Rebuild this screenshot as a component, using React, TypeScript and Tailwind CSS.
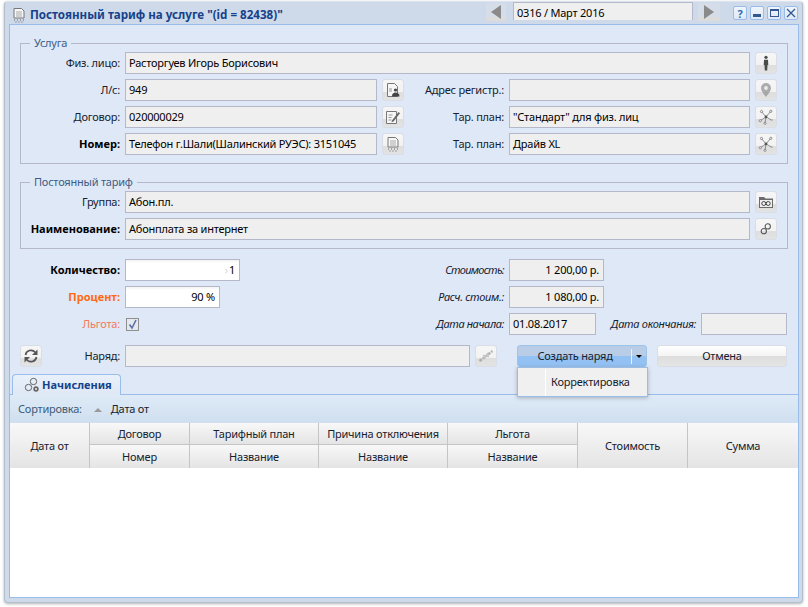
import type { ReactNode } from "react"

/* --- Icons --- */

function Svg({ children, size = 16, className = "" }: { children: ReactNode; size?: number; className?: string }) {
  return (
    <svg width={size} height={size} viewBox="0 0 16 16" fill="none" className={className}>
      {children}
    </svg>
  )
}

function PersonIcon() {
  return (
    <Svg>
      <circle cx="8" cy="2.300" r="1.600" fill="#4a4a4a" />
      <path d="M6 4.800h4l.3 5.200H9.500L9.200 15.500H6.800L6.500 10H5.700z" fill="#4a4a4a" />
    </Svg>
  )
}

function PinIcon() {
  return (
    <Svg>
      <path d="M8 1a5 5 0 0 0-5 5c0 3.400 3.400 6.400 5 9 1.600-2.600 5-5.600 5-9a5 5 0 0 0-5-5z" fill="#8f8f8f" />
      <circle cx="8" cy="6" r="1.900" fill="#e8e8e8" />
    </Svg>
  )
}

function PlanIcon() {
  return (
    <Svg>
      <path d="M8 8 3.500 2.500M8 8l4.500-5.500M8 8l-5.500 3.500M8 8l-1 6M8 8l5.500 3" stroke="#777" strokeWidth="0.800" />
      <circle cx="8" cy="8" r="1.400" fill="#555" />
      <circle cx="3.500" cy="2.500" r="1.100" fill="#f4f4f4" stroke="#777" strokeWidth="0.800" />
      <circle cx="12.800" cy="2.300" r="1.100" fill="#f4f4f4" stroke="#777" strokeWidth="0.800" />
      <circle cx="2.300" cy="11.700" r="1.100" fill="#f4f4f4" stroke="#777" strokeWidth="0.800" />
      <circle cx="7" cy="14.300" r="1.100" fill="#f4f4f4" stroke="#777" strokeWidth="0.800" />
      <circle cx="13.700" cy="11" r="1" fill="#aaa" />
    </Svg>
  )
}

function AccountIcon() {
  return (
    <Svg>
      <path d="M2.500 1.500h7l3 3v10h-10z" fill="#f6f6f6" stroke="#777" />
      <path d="M4 7h3M4 9h3" stroke="#999" />
      <circle cx="10.500" cy="8" r="1.600" fill="#444" />
      <path d="M7 14.500c0-3 1.500-4 3.500-4s4 1 4 4z" fill="#444" />
    </Svg>
  )
}

function EditIcon() {
  return (
    <Svg>
      <path d="M1.500 2.500h10v12h-10z" fill="#f6f6f6" stroke="#777" />
      <path d="M3.500 6h4M3.500 8.500h3M3.500 11h3" stroke="#999" />
      <path d="M7 11.500 13.500 3l1.500 1.200L8.500 12.500l-2 .8z" fill="#666" />
    </Svg>
  )
}

function StampIcon() {
  return (
    <Svg>
      <path d="M3 1.500h7.500l2.500 2.500v7H3z" fill="#f6f6f6" stroke="#777" />
      <path d="M5 5h6M5 7h6M5 9h6" stroke="#aaa" />
      <path d="M3 13h1M6 13h1M9 13h1M12 13h1M4.500 15h1M7.500 15h1M10.500 15h1" stroke="#666" strokeWidth="1.200" />
    </Svg>
  )
}

function GroupIcon() {
  return (
    <Svg>
      <path d="M1 3h5l1.500 1.500H15v9.500H1z" fill="#6b6b6b" />
      <rect x="2" y="6" width="12" height="7" fill="#efefef" />
      <circle cx="5.800" cy="9.500" r="2" stroke="#444" />
      <circle cx="10.200" cy="9.500" r="2" stroke="#444" />
    </Svg>
  )
}

function LinkIcon() {
  return (
    <Svg size={14}>
      <circle cx="10" cy="5" r="3" stroke="#555" strokeWidth="1.200" />
      <circle cx="5.500" cy="10.500" r="3" stroke="#555" strokeWidth="1.200" />
    </Svg>
  )
}

function ChargeIcon() {
  return (
    <Svg>
      <circle cx="9.500" cy="4.500" r="3.200" stroke="#666" />
      <circle cx="4.500" cy="10.500" r="3.200" stroke="#666" />
      <circle cx="12" cy="12" r="2.700" fill="#666" />
      <circle cx="12" cy="12" r="1" fill="#eee" />
    </Svg>
  )
}

function RefreshIcon() {
  return (
    <Svg>
      <path d="M2.500 7A5.600 5.600 0 0 1 12.200 4.200" stroke="#555" strokeWidth="1.700" />
      <path d="M13.500 9a5.600 5.600 0 0 1-9.700 2.800" stroke="#555" strokeWidth="1.700" />
      <path d="M14.500 1.500V7H9z" fill="#555" />
      <path d="M1.500 14.500V9H7z" fill="#555" />
    </Svg>
  )
}

function ChainIcon() {
  return (
    <Svg>
      <path d="M1.500 13 6 9.500M10 6.500 14.500 3" stroke="#999" strokeWidth="2.500" strokeDasharray="3 1" />
      <path d="M5 7.500 11 8.500M6 11l4-6" stroke="#aaa" strokeWidth="1.500" />
    </Svg>
  )
}

/* --- Form parts --- */

function IconButton({ children, faded }: { children: ReactNode; faded?: boolean }) {
  return (
    <button className="w-[22px] h-[22px] shrink-0 flex items-center justify-center rounded-[3px] border border-[#d8dde6] bg-[linear-gradient(#f6f6f6_0%,#f2f2f2_62%,#dedede_62%,#e3e3e3_100%)]">
      <span className={faded ? "opacity-70 flex" : "flex"}>{children}</span>
    </button>
  )
}

function Label({ children, width = "w-[95px]", className = "text-[#16212e]" }: { children: ReactNode; width?: string; className?: string }) {
  return <div className={`${width} shrink-0 text-right mr-[5px] ${className}`}>{children}</div>
}

function Box({ children, className = "", white }: { children?: ReactNode; className?: string; white?: boolean }) {
  return (
    <div
      className={`h-[22px] border border-[#b5b8c8] pl-[3px] pr-[4px] leading-[20px] whitespace-nowrap overflow-hidden text-black ${white ? "bg-[linear-gradient(#f2f2f2_0%,#ffffff_15%)]" : "bg-[#efefef]"} ${className}`}
    >
      {children}
    </div>
  )
}

function Legend({ children }: { children: ReactNode }) {
  return <legend className="ml-[5px] px-[4px] h-[14px] leading-[14px] text-[#3e5c86]">{children}</legend>
}

function HeadCell({ children, className = "" }: { children: ReactNode; className?: string }) {
  return (
    <div className={`flex items-center justify-center pt-[1px] text-[#16212e] bg-[linear-gradient(#f8f8f8,#e4e4e5)] ${className}`}>
      {children}
    </div>
  )
}

function HeadPair({ top, bottom, width }: { top: string; bottom: string; width: string }) {
  return (
    <div className={`${width} flex flex-col border-r border-[#c5c5c5]`}>
      <HeadCell className="h-[22px] border-b border-[#c5c5c5]">{top}</HeadCell>
      <HeadCell className="flex-1">{bottom}</HeadCell>
    </div>
  )
}

function WinButton({ children }: { children: ReactNode }) {
  return (
    <button className="w-[14px] h-[14px] flex items-center justify-center rounded-[2px] border border-[#99bce8] bg-[linear-gradient(#f0f5fb,#dfe8f6)]">
      {children}
    </button>
  )
}

function NavArrow({ dir, width }: { dir: "left" | "right"; width: string }) {
  return (
    <div className={`${width} h-[18px] mt-[1px] flex items-center justify-center bg-[linear-gradient(#d5dde8_0%,#d5dde8_78%,#dcdcdc_78%)]`}>
      <svg width="12" height="14" viewBox="0 0 12 14">
        <path d={dir === "left" ? "M11 0v14L1 7z" : "M1 0v14l10-7z"} fill="#8a8a8a" />
      </svg>
    </div>
  )
}

export default function App() {
  return (
    <div
      className="w-[808px] h-[607px] bg-white pt-[1px] pl-[4px] text-[11px] tracking-[-0.22px] text-black overflow-hidden"
      style={{ fontFamily: '"Noto Sans", "DejaVu Sans", sans-serif' }}
    >
      <div className="relative w-[799px] h-[602px] rounded-[4px] bg-[#cedaea] border border-[#b4bfce] border-t-[#dbe4ef] shadow-[0_1px_3px_rgba(0,0,0,0.3)] pl-[4px] pr-[3px] pb-[4px] flex flex-col">
        {/* title bar */}
        <div className="h-[22px] flex items-start shrink-0">
          <div className="flex items-center h-[19px] mt-[3px] ml-[2px]">
            <StampIcon />
            <span className="ml-[3px] font-bold text-[#15428b] text-[11.6px] tracking-normal whitespace-nowrap">Постоянный тариф на услуге "(id = 82438)"</span>
          </div>
          <div className="ml-auto flex items-start mr-[1px]">
            <NavArrow dir="left" width="w-[20px]" />
            <div className="ml-[7px] w-[180px] h-[18px] border border-[#b5b8c8] border-b-0 bg-[#efefef] px-[3px] leading-[20px]">0316 / Март 2016</div>
            <div className="ml-[5px]"><NavArrow dir="right" width="w-[22px]" /></div>
            <div className="ml-[13px] mt-[4px] flex gap-[3px]">
              <WinButton><span className="font-bold text-[#2f6db5] leading-none">?</span></WinButton>
              <WinButton><span className="w-[8px] h-[3px] bg-[#31598f] mt-[5px]" /></WinButton>
              <WinButton><span className="w-[9px] h-[8px] border border-t-2 border-[#31598f]" /></WinButton>
              <WinButton>
                <svg width="10" height="10" viewBox="0 0 10 10"><path d="M1 1l8 8M9 1 1 9" stroke="#31598f" strokeWidth="1.300" /></svg>
              </WinButton>
            </div>
          </div>
        </div>

        {/* window body */}
        <div className="relative flex-1 flex flex-col border border-[#99bce8] bg-[#dfe8f6] min-h-0">
          <div className="px-[10px] pt-[11px] flex flex-col shrink-0">
            <fieldset className="border border-[#b5b8c8] pl-[4px] pr-[10px] pb-[7px] h-[128px]">
              <Legend>Услуга</Legend>
              <div className="flex flex-col gap-[5px] pt-[2px]">
                <div className="flex items-center">
                  <Label>Физ. лицо:</Label>
                  <Box className="flex-1">Расторгуев Игорь Борисович</Box>
                  <div className="ml-[5px]"><IconButton><PersonIcon /></IconButton></div>
                </div>
                <div className="flex items-center">
                  <Label>Л/с:</Label>
                  <Box className="w-[252px]">949</Box>
                  <div className="ml-[5px]"><IconButton><AccountIcon /></IconButton></div>
                  <Label width="w-[100px]">Адрес регистр.:</Label>
                  <Box className="flex-1" />
                  <div className="ml-[5px]"><IconButton faded><PinIcon /></IconButton></div>
                </div>
                <div className="flex items-center">
                  <Label>Договор:</Label>
                  <Box className="w-[252px]">020000029</Box>
                  <div className="ml-[5px]"><IconButton><EditIcon /></IconButton></div>
                  <Label width="w-[100px]">Тар. план:</Label>
                  <Box className="flex-1">"Стандарт" для физ. лиц</Box>
                  <div className="ml-[5px]"><IconButton><PlanIcon /></IconButton></div>
                </div>
                <div className="flex items-center">
                  <Label className="font-bold tracking-normal text-black">Номер:</Label>
                  <Box className="w-[252px]">Телефон г.Шали(Шалинский РУЭС): 3151045</Box>
                  <div className="ml-[5px]"><IconButton><StampIcon /></IconButton></div>
                  <Label width="w-[100px]">Тар. план:</Label>
                  <Box className="flex-1">Драйв XL</Box>
                  <div className="ml-[5px]"><IconButton><PlanIcon /></IconButton></div>
                </div>
              </div>
            </fieldset>

            <fieldset className="mt-[11px] border border-[#b5b8c8] pl-[4px] pr-[10px] pb-[7px] h-[74px]">
              <Legend>Постоянный тариф</Legend>
              <div className="flex flex-col gap-[5px] pt-[2px]">
                <div className="flex items-center">
                  <Label>Группа:</Label>
                  <Box className="flex-1">Абон.пл.</Box>
                  <div className="ml-[5px]"><IconButton><GroupIcon /></IconButton></div>
                </div>
                <div className="flex items-center">
                  <Label className="font-bold tracking-normal text-black">Наименование:</Label>
                  <Box className="flex-1">Абонплата за интернет</Box>
                  <div className="ml-[5px]"><IconButton><LinkIcon /></IconButton></div>
                </div>
              </div>
            </fieldset>

            <div className="mt-[10px] flex flex-col gap-[5px] pl-[5px]">
              <div className="flex items-center">
                <Label className="font-bold tracking-normal text-black">Количество:</Label>
                <Box white className="w-[115px] text-right">
                  <span className="text-[#d8d8d8] mr-[1px]">›</span>1
                </Box>
                <Label width="w-[264px]" className="italic tracking-[-0.7px] text-[#16212e]">Стоимость:</Label>
                <Box className="w-[95px] text-right">1 200,00 р.</Box>
              </div>
              <div className="flex items-center">
                <Label className="font-bold tracking-normal text-[#ff6a13]">Процент:</Label>
                <Box white className="w-[95px] text-right">90 %</Box>
                <Label width="w-[284px]" className="italic tracking-[-0.3px] text-[#16212e]">Расч. стоим.:</Label>
                <Box className="w-[95px] text-right">1 080,00 р.</Box>
              </div>
              <div className="flex items-center h-[22px]">
                <Label className="text-[#f5785a]">Льгота:</Label>
                <div className="w-[13px] h-[13px] ml-[1px] border border-[#8f8f8f] bg-[#e4e8ef] flex items-center justify-center">
                  <svg width="11" height="11" viewBox="0 0 11 11"><path d="M2.500 5.500 5 9l4-8" stroke="#5a72a8" strokeWidth="1.600" fill="none" /></svg>
                </div>
                <Label width="w-[365px]" className="italic tracking-[-0.4px] text-[#16212e]">Дата начала:</Label>
                <Box className="w-[87px]">01.08.2017</Box>
                <Label width="w-[100px]" className="italic tracking-[-0.3px] text-[#16212e]">Дата окончания:</Label>
                <Box className="w-[86px]" />
              </div>
            </div>

            <div className="mt-[10px] flex items-center">
              <IconButton><RefreshIcon /></IconButton>
              <Label width="w-[78px]">Наряд:</Label>
              <Box className="w-[345px]" />
              <div className="ml-[5px]"><IconButton faded><ChainIcon /></IconButton></div>
              <button className="ml-[20px] w-[130px] h-[22px] flex items-center rounded-[3px] border border-[#9ec3ea] bg-[linear-gradient(#b9cde6_0%,#b9cde6_48%,#93c1f3_48%,#93c1f3_100%)]">
                <span className="flex-1 text-center text-[#16212e] pl-[1px]">Создать наряд</span>
                <span className="w-[1px] h-[15px] bg-[#e8f0fa]" />
                <span className="w-[14px] flex justify-center"><span className="border-x-[3px] border-x-transparent border-t-[3px] border-t-black" /></span>
              </button>
              <button className="ml-[10px] w-[130px] h-[22px] rounded-[3px] border border-[#d8dde6] text-[#16212e] bg-[linear-gradient(#ffffff_0%,#f4f4f4_48%,#dedede_48%,#e4e4e4_100%)]">Отмена</button>
            </div>
          </div>

          {/* tabs */}
          <div className="mt-[7px] pl-[2px] h-[20px] shrink-0 flex">
            <div className="w-[109px] h-[21px] z-10 flex items-center gap-[2px] pl-[11px] rounded-t-[4px] border border-b-0 border-[#99bce8] bg-[linear-gradient(#e8f0fa,#dfe8f6)]">
              <ChargeIcon />
              <span className="font-bold tracking-normal text-[#15428b]">Начисления</span>
            </div>
          </div>
          <div className="flex-1 flex flex-col min-h-0 border-t border-[#99bce8]">
            <div className="h-[28px] shrink-0 flex items-center pl-[8px] pt-[1px] text-[#3e5c78] bg-[linear-gradient(#dfeaf7,#cfdfef)]">
              <span>Сортировка:</span>
              <span className="ml-[12px] border-x-[4px] border-x-transparent border-b-[4px] border-b-[#9a9a9a]" />
              <span className="ml-[9px] text-[#16212e]">Дата от</span>
            </div>
            <div className="h-[45px] shrink-0 flex">
              <HeadCell className="w-[80px] border-r border-[#c5c5c5]">Дата от</HeadCell>
              <HeadPair width="w-[100px]" top="Договор" bottom="Номер" />
              <HeadPair width="w-[129px]" top="Тарифный план" bottom="Название" />
              <HeadPair width="w-[129px]" top="Причина отключения" bottom="Название" />
              <HeadPair width="w-[130px]" top="Льгота" bottom="Название" />
              <HeadCell className="w-[110px] border-r border-[#c5c5c5]">Стоимость</HeadCell>
              <HeadCell className="flex-1">Сумма</HeadCell>
            </div>
            <div className="flex-1 bg-white" />
          </div>

          {/* dropdown menu */}
          <div className="absolute left-[507px] top-[342px] w-[131px] h-[30px] z-20 flex items-center pt-[1px] border border-[#99bce8] bg-[#f0f0f0] shadow-[0_1px_4px_rgba(0,0,0,0.25)]">
            <span className="ml-[27px] w-[1px] h-full bg-white" />
            <span className="ml-[5px] text-[#16212e]">Корректировка</span>
          </div>
        </div>
      </div>
    </div>
  )
}
